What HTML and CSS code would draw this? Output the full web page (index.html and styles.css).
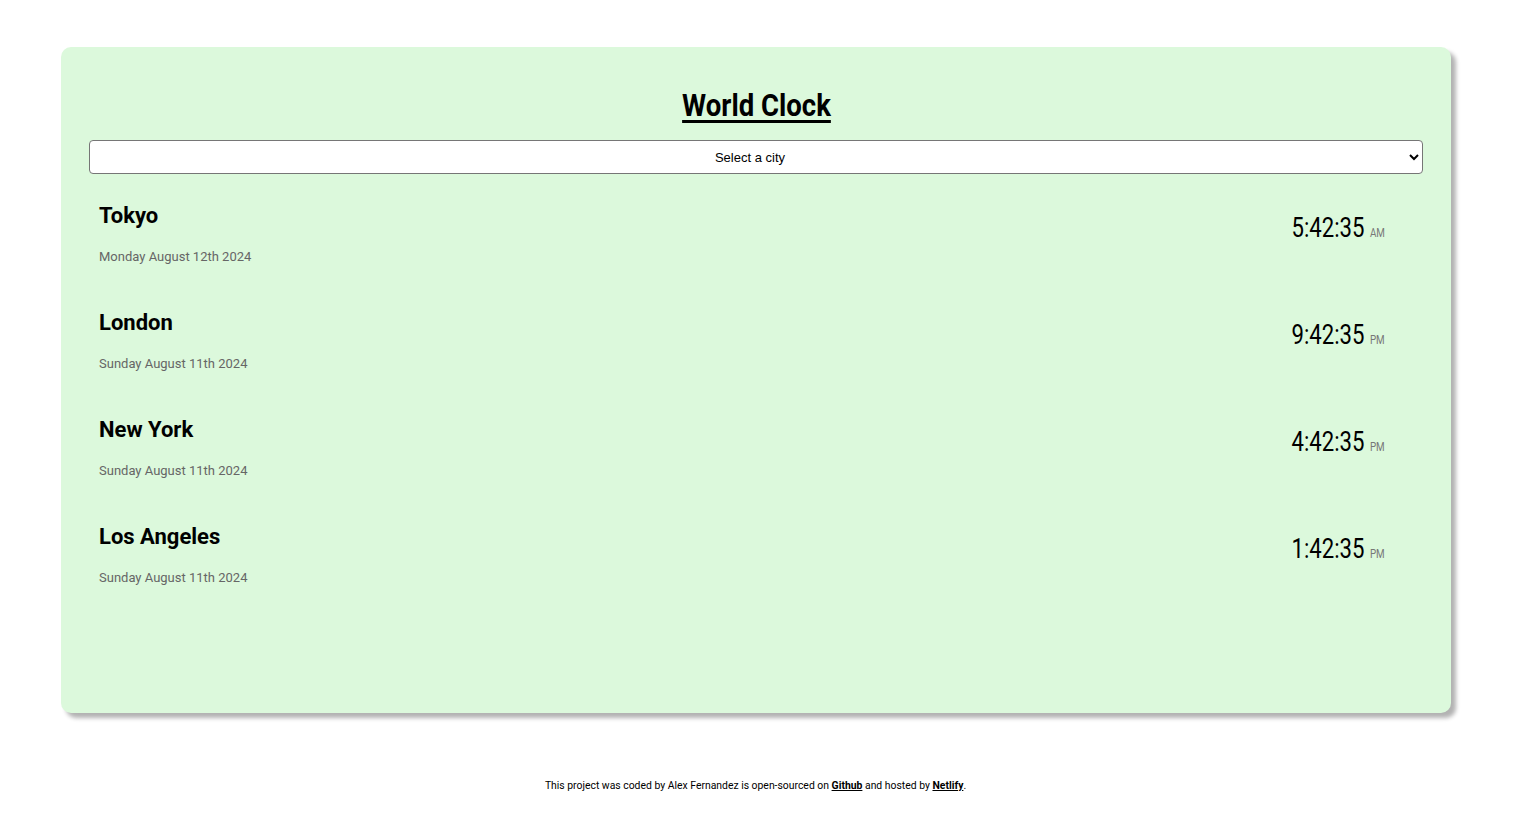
FILE: index.html
```html
<!DOCTYPE html>
<html lang="en">
<head>
<meta charset="utf-8">
<title>World Clock</title>
<link rel="stylesheet" href="styles.css">
</head>
<body>
<div class="container">
  <h1 class="title"><span class="title-text">World Clock</span></h1>
  <select class="city-select">
    <option>Select a city</option>
  </select>
  <div class="cities">
    <div class="city">
      <div class="city-info">
        <h2 class="city-name">Tokyo</h2>
        <div class="date">Monday August 12th 2024</div>
      </div>
      <div class="time">5:42:35 <small>AM</small></div>
    </div>
    <div class="city">
      <div class="city-info">
        <h2 class="city-name">London</h2>
        <div class="date">Sunday August 11th 2024</div>
      </div>
      <div class="time">9:42:35 <small>PM</small></div>
    </div>
    <div class="city">
      <div class="city-info">
        <h2 class="city-name">New York</h2>
        <div class="date">Sunday August 11th 2024</div>
      </div>
      <div class="time">4:42:35 <small>PM</small></div>
    </div>
    <div class="city">
      <div class="city-info">
        <h2 class="city-name">Los Angeles</h2>
        <div class="date">Sunday August 11th 2024</div>
      </div>
      <div class="time">1:42:35 <small>PM</small></div>
    </div>
  </div>
</div>
<footer class="footer">
  This project was coded by Alex Fernandez is open-sourced on <a href="#">Github</a> and hosted by <a href="#">Netlify</a>.
</footer>
</body>
</html>
```
FILE: styles.css
```css
html, body {
  margin: 0;
  padding: 0;
  background: #ffffff;
}

body {
  font-family: Roboto, "Noto Sans", sans-serif;
  color: #000;
}

.container {
  box-sizing: border-box;
  width: 1390px;
  height: 666px;
  margin: 47px 0 0 61px;
  padding: 36px 28px 0 28px;
  background: #dcf9dc;
  border-radius: 10px;
  box-shadow: 5px 5px 4px rgba(0, 0, 0, 0.3);
}

.title {
  margin: 0 0 13px 0;
  text-align: center;
  font-weight: 700;
  font-size: 32px;
  line-height: 44px;
}

.title-text {
  display: inline-block;
  transform: scaleX(0.86);
  text-decoration: underline;
  text-decoration-thickness: 3px;
  text-underline-offset: 4px;
}

.city-select {
  display: block;
  width: 100%;
  height: 34px;
  background: #fff;
  border: 1px solid #767676;
  border-radius: 4px;
  font-family: "Liberation Sans", Arial, sans-serif;
  font-size: 13px;
  text-align: center;
  text-align-last: center;
  color: #000;
}

.cities {
  padding: 0 38px 0 10px;
}

.city {
  display: flex;
  justify-content: space-between;
  align-items: center;
  height: 107px;
}

.city-info {
  padding-top: 12px;
}

.city-name {
  margin: 0 0 18px 0;
  font-size: 22px;
  font-weight: 700;
  line-height: 28px;
}

.date {
  font-size: 13px;
  color: #666;
  line-height: 18px;
}

.time {
  font-size: 27px;
  transform: scaleX(0.82);
  transform-origin: right center;
}

.time small {
  font-size: 12px;
  color: #777;
}

.footer {
  margin-top: 66px;
  padding-right: 9px;
  text-align: center;
  font-size: 10.4px;
  color: #000;
}

.footer a {
  color: #000;
  font-weight: 700;
}
```
